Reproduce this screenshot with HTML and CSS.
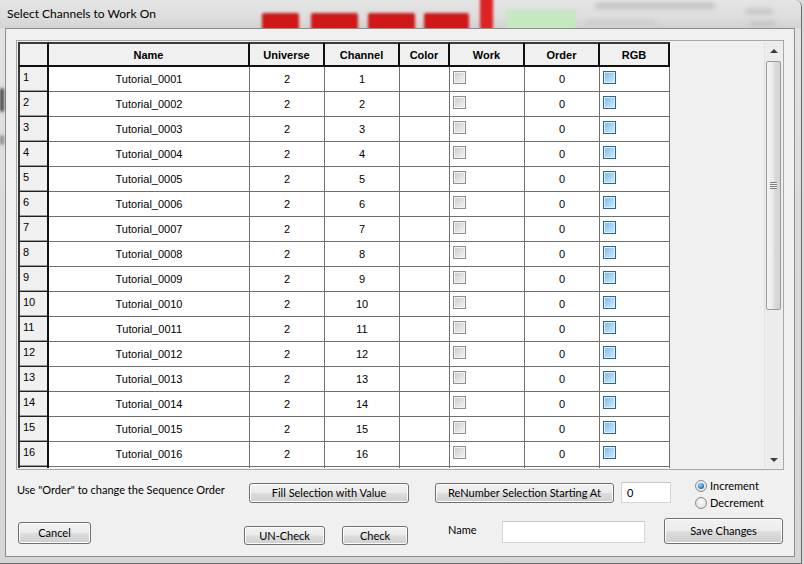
FILE: index.html
```html
<!DOCTYPE html>
<html>
<head>
<meta charset="utf-8">
<link rel="stylesheet" href="styles.css">
</head>
<body>
<div class="window">
  <div class="titlebar">
    <span class="blur red r1"></span>
    <span class="blur red r2"></span>
    <span class="blur red r3"></span>
    <span class="blur red r4"></span>
    <span class="blur red rbar"></span>
    <span class="blur green"></span>
    <span class="blur grey g1"></span>
    <span class="blur grey g2"></span>
    <span class="blur grey g3"></span>
    <span class="blur grey g4"></span>
    <span class="title">Select Channels to Work On</span>
  </div>
  <span class="blur spot s1"></span>
  <span class="blur spot s2"></span>
  <div class="client">
    <div class="grid">
      <div class="tablewrap">
        <table class="chan">
          <thead>
            <tr class="hdr">
              <th class="c-row"></th>
              <th class="c-name">Name</th>
              <th class="c-uni">Universe</th>
              <th class="c-ch">Channel</th>
              <th class="c-col">Color</th>
              <th class="c-work">Work</th>
              <th class="c-ord">Order</th>
              <th class="c-rgb">RGB</th>
            </tr>
          </thead>
          <tbody id="rows"></tbody>
        </table>
      </div>
      <div class="scrollbar">
        <div class="sb-btn"><span class="arrow up"></span></div>
        <div class="thumb"><span class="grip"></span></div>
        <div class="sb-fill"></div>
        <div class="sb-btn down"><span class="arrow dn"></span></div>
      </div>
    </div>

    <div class="row1">
      <span class="hint">Use "Order" to change the Sequence Order</span>
      <button class="btn fill">Fill Selection with Value</button>
      <button class="btn renum">ReNumber Selection Starting At</button>
      <input class="txt start" type="text" value="0">
      <div class="radios">
        <label class="radio"><span class="rb on"></span>Increment</label>
        <label class="radio"><span class="rb"></span>Decrement</label>
      </div>
    </div>

    <div class="row2">
      <button class="btn cancel">Cancel</button>
      <button class="btn uncheck">UN-Check</button>
      <button class="btn check">Check</button>
      <span class="namelbl">Name</span>
      <input class="txt name" type="text" value="">
      <button class="btn save">Save Changes</button>
    </div>
  </div>
</div>
<script>
  var tb = document.getElementById('rows');
  var html = '';
  for (var i = 1; i <= 16; i++) {
    var n = ('000' + i).slice(-4);
    html += '<tr class="drow">' +
      '<td class="rh">' + i + '</td>' +
      '<td>Tutorial_' + n + '</td>' +
      '<td>2</td>' +
      '<td>' + i + '</td>' +
      '<td></td>' +
      '<td class="cb"><span class="box gray"></span></td>' +
      '<td>0</td>' +
      '<td class="cb"><span class="box blue"></span></td>' +
      '</tr>';
  }
  html += '<tr class="drow"><td class="rh"></td><td></td><td></td><td></td><td></td><td></td><td></td><td></td></tr>';
  tb.innerHTML = html;
</script>
</body>
</html>
```

FILE: styles.css
```css
html, body {
  margin: 0;
  padding: 0;
}
body {
  width: 804px;
  height: 564px;
  overflow: hidden;
  background: #d9d9d9;
  font-family: "Liberation Sans", Arial, sans-serif;
  color: #000;
}
.window {
  position: relative;
  width: 801px;
  height: 563px;
  border-right: 1px solid #6b6b6b;
  border-bottom: 1px solid #6b6b6b;
  border-top-right-radius: 7px;
  background: linear-gradient(to bottom, #e4e4e4 0%, #dadada 40%, #d6d6d6 100%);
  overflow: hidden;
}
.titlebar {
  position: relative;
  height: 28px;
  overflow: hidden;
  background: linear-gradient(to bottom, #e4e4e4 0%, #dedede 60%, #d2d2d2 100%);
}
.title {
  position: relative;
  display: block;
  padding-left: 7px;
  padding-top: 6px;
  font-family: Lato, "Liberation Sans", sans-serif;
  font-size: 12px;
  line-height: 15px;
  color: #000;
}
.blur {
  position: absolute;
  filter: blur(1.6px);
}
.red { background: #d01818; border-radius: 2px; }
.r1 { left: 262px; top: 13px; width: 37px; height: 18px; }
.r2 { left: 311px; top: 13px; width: 47px; height: 18px; }
.r3 { left: 368px; top: 13px; width: 47px; height: 18px; }
.r4 { left: 424px; top: 13px; width: 45px; height: 18px; }
.rbar { left: 480px; top: -4px; width: 13px; height: 34px; background: #dc2222; }
.green { left: 506px; top: 10px; width: 70px; height: 20px; background: #c4e9bf; }
.grey { background: #c4c4c4; border-radius: 2px; filter: blur(2.2px); }
.g1 { left: 595px; top: 3px; width: 120px; height: 6px; }
.g2 { left: 586px; top: 20px; width: 70px; height: 5px; background: #cdcdcd; }
.g3 { left: 745px; top: 9px; width: 28px; height: 5px; }
.g4 { left: 750px; top: 21px; width: 25px; height: 5px; }
.spot { background: #444; width: 4px; border-radius: 2px; }
.s1 { left: 0; top: 88px; height: 24px; }
.s2 { left: 0; top: 135px; height: 10px; background: #888; }

.client {
  margin-left: 5px;
  border: 1px solid #8d8d8d;
  background: #f0f0f0;
  padding: 11px 0 0 10px;
  box-sizing: content-box;
  height: 516px;
  width: 778px;
}

/* grid */
.grid {
  display: flex;
  border: 1px solid #a7a7a7;
  padding: 1px;
  box-sizing: border-box;
  height: 430px;
  width: 768px;
  background: #f0f0f0;
}
.tablewrap {
  flex: 1;
  overflow: hidden;
  background: #f0f0f0;
}
.chan {
  border-collapse: separate;
  border-spacing: 0;
  table-layout: fixed;
  width: 652px;
  font-size: 11px;
}
.chan th, .chan td {
  box-sizing: border-box;
  padding: 0;
  text-align: center;
  vertical-align: middle;
  white-space: nowrap;
  overflow: hidden;
}
.chan th {
  background: #f0f0f0;
  font-weight: bold;
  border-top: 2px solid #3a3a3a;
  border-right: 2px solid #101010;
  border-bottom: 2px solid #101010;
}
.chan th.c-row { border-left: 2px solid #3a3a3a; }
.c-row { width: 31px; }
.c-name { width: 201px; }
.c-uni { width: 75px; }
.c-ch { width: 75px; }
.c-col { width: 50px; }
.c-work { width: 75px; }
.c-ord { width: 75px; }
.c-rgb { width: 70px; }
tr.hdr { height: 25px; }
tr.drow { height: 25px; }
.chan td {
  background: #fff;
  border-right: 1px solid #6f6f6f;
  border-bottom: 1px solid #6f6f6f;
  line-height: 13px;
}
.chan td.rh {
  background: #f0f0f0;
  text-align: left;
  vertical-align: top;
  padding: 4px 0 0 3px;
  border-left: 2px solid #3a3a3a;
  border-right: 2px solid #101010;
  border-bottom: 1px solid #202020;
  box-shadow: inset 0 -1px 0 #9a9a9a;
}
.chan td.cb {
  vertical-align: top;
  text-align: left;
  padding: 4px 0 0 3px;
}
.box {
  display: block;
  width: 13px;
  height: 13px;
  box-sizing: border-box;
}
.box.gray {
  border: 1px solid #8f8f8f;
  background: linear-gradient(135deg, #c8c8c8 0%, #e0e0e0 50%, #f4f4f4 100%);
  box-shadow: inset 0 0 0 1px #f2f2f2;
}
.box.blue {
  border: 1px solid #2b6590;
  background: linear-gradient(135deg, #78baec 0%, #a6d4f6 50%, #d4edfd 100%);
  box-shadow: inset 0 0 0 1px #dceefb;
}

/* scrollbar */
.scrollbar {
  width: 17px;
  display: flex;
  flex-direction: column;
  background: #ececec;
  border-left: 1px solid #e2e2e2;
}
.sb-btn {
  height: 18px;
  display: flex;
  justify-content: center;
  align-items: center;
}
.sb-btn.down { height: 17px; align-items: flex-end; padding-bottom: 6px; box-sizing: border-box; }
.arrow {
  width: 0;
  height: 0;
  border-left: 4px solid transparent;
  border-right: 4px solid transparent;
}
.arrow.up { border-bottom: 4px solid #3c3c3c; }
.arrow.dn { border-top: 4px solid #3c3c3c; }
.thumb {
  margin: 1px 0 0 1px;
  width: 15px;
  height: 249px;
  box-sizing: border-box;
  border: 1px solid #9b9b9b;
  border-radius: 2px;
  background: linear-gradient(to right, #f4f4f4 0%, #ebebeb 45%, #dcdcdc 55%, #d2d2d2 100%);
  display: flex;
  justify-content: center;
  align-items: center;
}
.grip {
  width: 7px;
  height: 7px;
  background: repeating-linear-gradient(to bottom, #7f7f7f 0, #7f7f7f 1px, #f2f2f2 1px, #f2f2f2 2px);
}
.sb-fill { flex: 1; }

/* bottom controls */
.row1 {
  display: flex;
  align-items: flex-start;
  height: 20px;
  margin-top: 13px;
  margin-left: 1px;
}
.hint, .namelbl, .radio, .btn {
  font-family: Lato, "Liberation Sans", sans-serif;
  font-size: 11px;
  color: #000;
}
.hint {
  width: 232px;
  line-height: 14px;
}
.btn {
  box-sizing: border-box;
  padding: 0;
  border: 1px solid #707070;
  border-radius: 3px;
  background: linear-gradient(to bottom, #f2f2f2 0%, #ebebeb 49%, #dddddd 51%, #cfcfcf 100%);
  box-shadow: inset 0 0 0 1px #fcfcfc;
  line-height: 14px;
  text-align: center;
}
.fill { width: 160px; height: 20px; }
.renum { width: 179px; height: 20px; margin-left: 26px; }
.txt {
  box-sizing: border-box;
  border: 1px solid #d5d5d5;
  border-top-color: #c6c6c6;
  background: #fff;
  padding: 0 0 0 5px;
  font-family: Lato, "Liberation Sans", sans-serif;
  font-size: 11px;
  outline: none;
}
.start { width: 50px; height: 21px; margin-left: 7px; margin-top: -1px; }
.radios {
  margin-left: 24px;
  margin-top: -4px;
  display: flex;
  flex-direction: column;
  gap: 3px;
}
.radio {
  display: flex;
  align-items: center;
  height: 14px;
  line-height: 14px;
}
.rb {
  width: 12px;
  height: 12px;
  box-sizing: border-box;
  border-radius: 50%;
  border: 1px solid #8b8b8b;
  background: radial-gradient(circle at 50% 40%, #fbfbfb 0%, #e3e3e3 70%, #d0d0d0 100%);
  margin-right: 3px;
  display: flex;
  justify-content: center;
  align-items: center;
}
.rb.on::after {
  content: "";
  width: 6px;
  height: 6px;
  border-radius: 50%;
  background: radial-gradient(circle at 40% 35%, #a8dcfa 0%, #3a8fd0 45%, #134a7c 100%);
}
.row2 {
  display: flex;
  align-items: flex-start;
  margin-top: 15px;
}
.cancel { width: 73px; height: 22px; margin-left: 2px; margin-top: 4px; }
.uncheck { width: 81px; height: 19px; margin-left: 153px; margin-top: 8px; }
.check { width: 66px; height: 19px; margin-left: 17px; margin-top: 8px; }
.namelbl { width: 54px; margin-left: 40px; margin-top: 5px; line-height: 14px; }
.name { width: 143px; height: 22px; margin-top: 3px; }
.save { width: 119px; height: 26px; margin-left: 19px; }
```
